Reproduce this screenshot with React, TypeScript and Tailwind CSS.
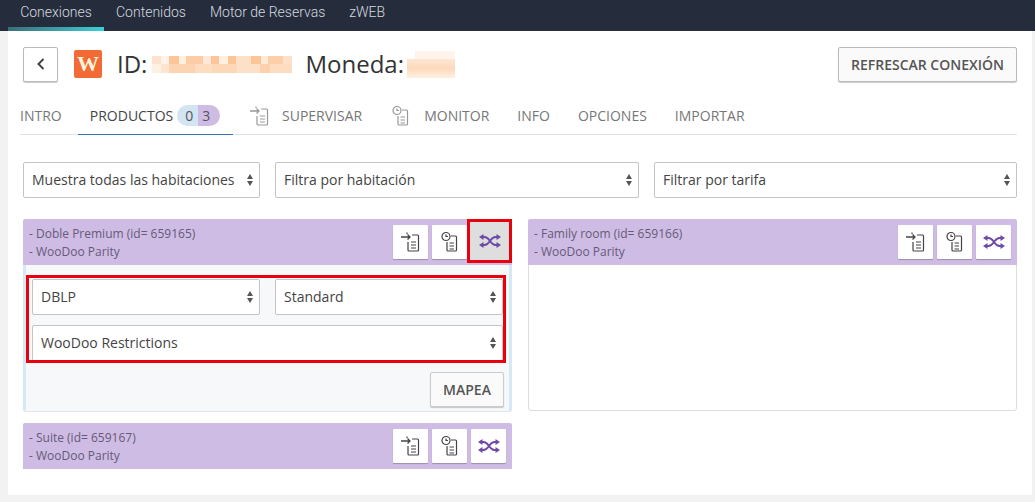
const sans = "font-['Open_Sans',sans-serif]";

const IconPlus = () => (
  <svg width="22" height="22" viewBox="0 0 22 22" fill="none" stroke="currentColor" strokeWidth="1.2">
    <path d="M1 6h9M7.5 3.5 10 6l-2.5 2.5" strokeWidth="1.3" />
    <path d="M7 3V1.5h0M12 4h5.5a1 1 0 0 1 1 1v14a1 1 0 0 1-1 1H9a1 1 0 0 1-1-1v-8" />
    <path d="M11 11h5M11 14h5M11 17h5" />
  </svg>
);

const IconClock = () => (
  <svg width="22" height="22" viewBox="0 0 22 22" fill="none" stroke="currentColor" strokeWidth="1.2">
    <circle cx="7" cy="5.5" r="4" />
    <path d="M7 3.5v2h2" />
    <path d="M12 5h4.5a1 1 0 0 1 1 1v13a1 1 0 0 1-1 1H9a1 1 0 0 1-1-1v-8" />
    <path d="M10.5 12h4.5M10.5 15h4.5M10.5 18h4.5" />
  </svg>
);

const IconShuffle = () => (
  <svg width="22" height="14" viewBox="0 0 22 14" fill="#6d4aa8" stroke="#6d4aa8" strokeWidth="1.9">
    <path fill="none" d="M4 3h1.500c3 0 4 2 5.500 4s2.500 4 5.500 4H18" />
    <path fill="none" d="M4 11h1.500c3 0 4-2 5.500-4s2.500-4 5.500-4H18" />
    <path stroke="none" d="M17.500 0 22 3l-4.500 3zM17.500 8 22 11l-4.500 3zM4.500 0 0 3l4.500 3zM4.500 8 0 11l4.500 3z" />
  </svg>
);

const Select = ({ label, className = "" }: { label: string; className?: string }) => (
  <div
    className={`flex h-9 items-center justify-between rounded-[2px] border border-[#c4c4c4] bg-white pl-2 pr-[6px] text-[14px] text-[#444] ${className}`}
  >
    <span className="whitespace-nowrap pb-[2px]">{label}</span>
    <span className="ml-2 flex flex-col gap-[2px]">
      <span className="h-0 w-0 border-x-[3.5px] border-b-[5px] border-x-transparent border-b-[#555]" />
      <span className="h-0 w-0 border-x-[3.5px] border-t-[5px] border-x-transparent border-t-[#555]" />
    </span>
  </div>
);

const ActionButton = ({ children }: { children: React.ReactNode }) => (
  <div className="flex h-[34px] w-[35px] items-center justify-center rounded-[1px] bg-white text-[#444] shadow-[0_1px_1px_rgba(0,0,0,0.25)]">
    {children}
  </div>
);

const CardHeader = ({ name, active }: { name: string; active?: boolean }) => (
  <div className="relative flex h-[46px] items-center justify-between rounded-t-[2px] bg-[#cfbce4] pl-[6px] pr-[6px] pt-[2px] text-[12px] leading-[18px] text-[#655a78]">
    <div>
      <div>{name}</div>
      <div>- WooDoo Parity</div>
    </div>
    <div className="-mt-[2px] flex items-center gap-[4px]">
      <ActionButton>
        <IconPlus />
      </ActionButton>
      <ActionButton>
        <IconClock />
      </ActionButton>
      <ActionButton>
        <IconShuffle />
      </ActionButton>
    </div>
    {active && (
      <div className="absolute right-0 top-0 flex h-[44px] w-[45px] items-center justify-center border-[3px] border-[#e8000f] bg-[#dedede]">
        <IconShuffle />
      </div>
    )}
  </div>
);

const idTop = [
  "w-[9px] bg-[#fde3cd]", "w-[8px] bg-[#fff2e8]", "w-[10px] bg-[#fbc598]", "w-[7px] bg-[#fff0e2]",
  "w-[17px] bg-[#fccda5]", "w-[8px] bg-[#fee9d8]", "w-[8px] bg-[#fbc598]", "w-[9px] bg-[#fff0e2]",
  "w-[8px] bg-[#fbc598]", "w-[15px] bg-[#fde0c8]", "w-[10px] bg-[#fbc598]", "w-[7px] bg-[#fee9d8]",
  "w-[15px] bg-[#fccfa9]", "w-[9px] bg-[#fde0c8]",
];

const idBottom = [
  "w-[9px] bg-[#fff0e2]", "w-[8px] bg-[#fee5d0]", "w-[26px] bg-[#fdd4b2]", "w-[17px] bg-[#fddcc0]",
  "w-[25px] bg-[#fdd8b8]", "w-[23px] bg-[#fde0c8]", "w-[10px] bg-[#fcd0aa]", "w-[22px] bg-[#fddcc0]",
];

const TabLabel = ({ children }: { children: React.ReactNode }) => (
  <span className="text-[14px] text-[#777]">{children}</span>
);

export default function App() {
  return (
    <div className={`h-[502px] w-[1035px] overflow-hidden bg-[#f2f2f2] ${sans}`}>
      <nav className="flex h-[31px] bg-[#252d3d] pl-2 font-['Roboto',sans-serif] text-[14px] font-light text-[#d5d9df]">
        <div className="relative flex h-full w-[96px] items-center justify-center pb-[6px]">
          Conexiones
          <div className="absolute bottom-0 left-0 right-0 h-[4px] bg-gradient-to-r from-[#3a6f7a] to-[#38d0d8]" />
        </div>
        <div className="ml-3 flex items-center pb-[6px]">Contenidos</div>
        <div className="ml-6 flex items-center pb-[6px]">Motor de Reservas</div>
        <div className="ml-6 flex items-center pb-[6px]">zWEB</div>
      </nav>

      <main className="ml-2 mr-[3px] h-[464px] bg-white px-[15px]">
        <header className="flex items-center justify-between pt-[15px]">
          <div className="flex items-center">
            <button className="flex h-[35px] w-[35px] items-center justify-center rounded-[2px] border border-[#bbb] bg-white shadow-[0_1px_1px_rgba(0,0,0,0.2)]">
              <svg width="10" height="14" viewBox="0 0 10 14" fill="none" stroke="#444" strokeWidth="2">
                <path d="M7.5 2 2.500 7l5 5" />
              </svg>
            </button>
            <div className="ml-4 flex h-[28px] w-[28px] items-center justify-center rounded-[2px] bg-[#f26a35] font-['Liberation_Serif',serif] text-[22px] font-bold leading-none text-[#fff3dc]">
              W
            </div>
            <span className="ml-[15px] text-[24px] text-[#333]">ID:</span>
            <div className="ml-[5px] flex w-[140px] flex-col">
              <div className="flex h-[8px]">
                {idTop.map((c, i) => (
                  <div key={i} className={c} />
                ))}
              </div>
              <div className="flex h-[9px]">
                {idBottom.map((c, i) => (
                  <div key={i} className={c} />
                ))}
              </div>
            </div>
            <span className="ml-[13px] text-[24px] text-[#333]">Moneda:</span>
            <div className="ml-[3px] flex h-[27px] w-[48px] flex-col items-end">
              <div className="h-[8px] w-[40px] bg-[#fff3ea]" />
              <div className="h-[19px] w-full bg-gradient-to-b from-[#fee6d3] via-[#fdd9bb] to-[#fff0e4]" />
            </div>
          </div>
          <button className="flex h-[35px] w-[179px] items-center justify-center rounded-[2px] border border-[#bbb] bg-[#fafafa] text-[14px] font-semibold text-[#555] shadow-[0_1px_1px_rgba(0,0,0,0.2)]">
            REFRESCAR CONEXIÓN
          </button>
        </header>

        <div className="-ml-[3px] mt-[15px] flex h-[38px] items-center border-b border-[#e3e3e3] text-[14px]">
          <div className="w-[43px]">
            <TabLabel>INTRO</TabLabel>
          </div>
          <div className="relative ml-[15px] flex h-full w-[155px] items-center justify-center pr-[1px]">
            <span className="text-[14px] text-[#444]">PRODUCTOS</span>
            <span className="ml-[4px] flex h-[21px] overflow-hidden rounded-full text-[14px] leading-[21px] text-[#555]">
              <span className="w-[21px] bg-[#d3e4f3] pl-[8px]">0</span>
              <span className="w-[22px] bg-[#cfbce4] pl-[4px]">3</span>
            </span>
            <div className="absolute -bottom-px left-0 right-0 h-px bg-[#3a73b8]" />
          </div>
          <div className="ml-[16px] flex items-center text-[#999]">
            <IconPlus />
          </div>
          <div className="ml-[11px]">
            <TabLabel>SUPERVISAR</TabLabel>
          </div>
          <div className="ml-[28px] flex items-center text-[#999]">
            <IconClock />
          </div>
          <div className="ml-[12px]">
            <TabLabel>MONITOR</TabLabel>
          </div>
          <div className="ml-[28px]">
            <TabLabel>INFO</TabLabel>
          </div>
          <div className="ml-[28px]">
            <TabLabel>OPCIONES</TabLabel>
          </div>
          <div className="ml-[28px]">
            <TabLabel>IMPORTAR</TabLabel>
          </div>
        </div>

        <div className="mt-[27px] flex gap-[15px]">
          <Select label="Muestra todas las habitaciones" className="w-[237px]" />
          <Select label="Filtra por habitación" className="w-[364px]" />
          <Select label="Filtrar por tarifa" className="w-[363px]" />
        </div>

        <div className="mt-[21px] flex items-start gap-4">
          <div className="flex w-[489px] flex-col gap-[11px]">
            <div className="h-[193px] rounded-[3px] border-x-[3px] border-b border-x-[#d6e8f5] border-b-[#dfe6ec] bg-[#f6f8fa]">
              <div className="-mx-[3px]">
                <CardHeader name="- Doble Premium (id= 659165)" active />
              </div>
              <div className="relative flex flex-col gap-[10px] px-[6px] pt-[14px]">
                <div className="flex gap-[15px]">
                  <Select label="DBLP" className="w-[228px]" />
                  <Select label="Standard" className="w-[228px]" />
                </div>
                <Select label="WooDoo Restrictions" />
                <div className="absolute left-0 right-[3px] top-[10px] h-[88px] border-[3px] border-[#e8000f]" />
              </div>
              <div className="mt-[11px] flex justify-end pr-[5px]">
                <button className="flex h-[35px] w-[74px] items-center justify-center rounded-[2px] border border-[#ccc] bg-[#fafafa] text-[14px] font-semibold text-[#555] shadow-[0_1px_1px_rgba(0,0,0,0.2)]">
                  MAPEA
                </button>
              </div>
            </div>
            <CardHeader name="- Suite (id= 659167)" />
          </div>
          <div className="h-[192px] w-[489px] rounded-[3px] border border-[#ddd] bg-white">
            <div className="-mx-px -mt-px">
              <CardHeader name="- Family room (id= 659166)" />
            </div>
          </div>
        </div>
      </main>
    </div>
  );
}
